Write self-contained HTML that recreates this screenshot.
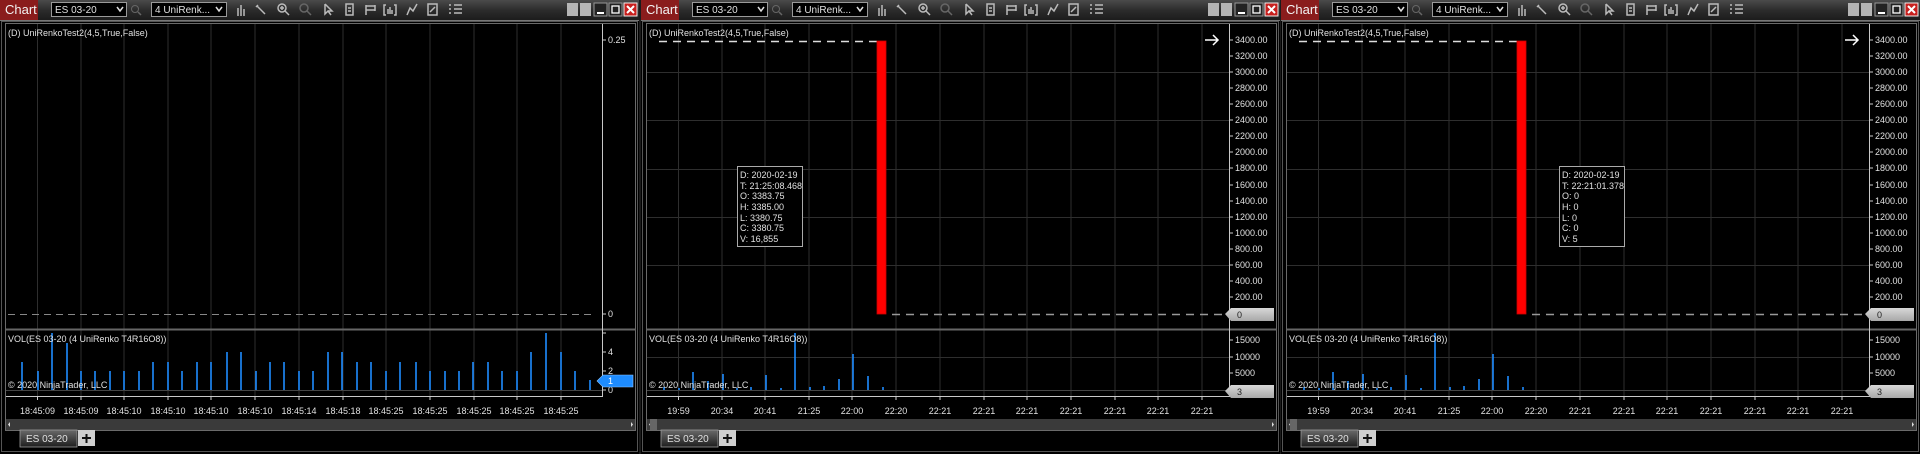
<!DOCTYPE html>
<html><head><meta charset="utf-8"><style>
html,body{margin:0;padding:0;background:#1b1b1b;width:1920px;height:454px;overflow:hidden}
.p{position:absolute;top:0;width:639px;height:454px}
svg{display:block}
text{font-family:"Liberation Sans",sans-serif;fill:#e0e0e0;font-size:9px}
</style></head><body>

<!-- shared defs -->
<svg width="0" height="0" style="position:absolute">
<defs>
<linearGradient id="tb" x1="0" y1="0" x2="0" y2="1"><stop offset="0" stop-color="#4a4a4a"/><stop offset="0.5" stop-color="#2c2c2c"/><stop offset="1" stop-color="#1c1c1c"/></linearGradient>
<linearGradient id="tab" x1="0" y1="0" x2="0" y2="1"><stop offset="0" stop-color="#6a6a6a"/><stop offset="1" stop-color="#1e1e1e"/></linearGradient>
<linearGradient id="gb" x1="0" y1="0" x2="0" y2="1"><stop offset="0" stop-color="#d8d8d8"/><stop offset="1" stop-color="#a8a8a8"/></linearGradient>
<g id="toolbar">
<rect x="0" y="0" width="639" height="20" fill="url(#tb)"/>
<rect x="0" y="20" width="639" height="1" fill="#777"/>
<rect x="0" y="0" width="38" height="20" fill="#8a1c1c"/>
<text x="5" y="14" style="font-size:13px;fill:#f2f2f2">Chart</text>
<rect x="51.5" y="2.5" width="75" height="14" fill="#000" stroke="#9a9a9a"/>
<text x="55" y="13" style="font-size:10px">ES 03-20</text>
<path d="M117 7l3 4 3-4" stroke="#ddd" stroke-width="1.5" fill="none"/>
<circle cx="135" cy="9" r="3.5" stroke="#666" fill="none"/><path d="M138 12l3 3" stroke="#666" stroke-width="1.5"/>
<rect x="151.5" y="2.5" width="75" height="14" fill="#000" stroke="#9a9a9a"/>
<text x="155" y="13" style="font-size:10px">4 UniRenk...</text>
<path d="M216 7l3 4 3-4" stroke="#ddd" stroke-width="1.5" fill="none"/>
<g stroke="#bbb" stroke-width="1.5" fill="none">
<path d="M238 8v8M241 5v11M244 9v7"/>
<path d="M257 6l8 8M256 7l2-2"/>
<circle cx="282" cy="8" r="4"/><path d="M285 11l4 4M280 8h4M282 6v4"/>
<circle cx="304" cy="8" r="4" stroke="#666"/><path d="M307 11l4 4" stroke="#666"/>
<path d="M325 4v10l3-3 3 4M325 4l7 7h-4"/>
<path d="M346 4h7v11h-7zM348 8h3M348 11h3"/>
<path d="M366 5v10M366 6h9v4h-9M375 5v6"/>
<path d="M386 5h-2v10h2M394 5h2v10h-2M388 14v-5M390 14v-7M392 14v-4"/>
<path d="M407 15l3-7 3 3 4-7"/>
<rect x="428" y="4" width="9" height="11"/><path d="M430 12l5-5"/>
<path d="M449 5h2M449 9h2M449 13h2M454 5h8M454 9h8M454 13h8"/>
</g>
<rect x="567" y="3" width="11" height="13" fill="#b5b5b5"/>
<rect x="580" y="3" width="11" height="13" fill="#b5b5b5"/>
<rect x="594" y="3" width="13" height="13" fill="#222" stroke="#999"/><path d="M597 13h7" stroke="#fff" stroke-width="2"/>
<rect x="609" y="3" width="13" height="13" fill="#222" stroke="#999"/><rect x="612" y="6" width="7" height="7" fill="none" stroke="#fff" stroke-width="1.3"/>
<rect x="624" y="3" width="13" height="13" fill="#c8201e" stroke="#eee"/><path d="M627 6l7 7M634 6l-7 7" stroke="#fff" stroke-width="2"/>
</g>
<g id="frame">
<rect x="1.5" y="21.5" width="636" height="430" fill="none" stroke="#555"/>
<rect x="5.5" y="23.5" width="630" height="407" fill="none" stroke="#6a6a6a"/>
<rect x="6" y="419" width="629" height="11" fill="#3a3a3a"/>
<path d="M10 422v5l-2-2.5z M631 422v5l2-2.5z" fill="#ddd"/>
<rect x="20" y="430" width="57" height="17" fill="url(#tab)" stroke="#999" stroke-width="0.8"/>
<text x="26" y="442" style="font-size:10px">ES 03-20</text>
<rect x="78" y="430" width="17" height="16" fill="#cfcfcf"/>
<path d="M82 438h9M86.5 434v9" stroke="#111" stroke-width="2"/>
</g>
<g id="vgrid" stroke="#2e2e2e" stroke-width="1">
<path d="M37.5 24V396M81 24V396M124 24V396M168 24V396M211 24V396M255 24V396M299 24V396M343 24V396M386 24V396M430 24V396M474 24V396M517 24V396M561 24V396"/>
</g>
<g id="ticks" stroke="#ccc">
<path d="M37.5 396v4M81 396v4M124 396v4M168 396v4M211 396v4M255 396v4M299 396v4M343 396v4M386 396v4M430 396v4M474 396v4M517 396v4M561 396v4"/>
</g>
</defs></svg>

<!-- PANEL 1 -->
<div class="p" style="left:0"><svg width="639" height="454">
<rect width="639" height="454" fill="#000"/>
<use href="#toolbar"/>
<use href="#vgrid"/>
<use href="#frame"/>
<path d="M6 329.5H636" stroke="#666" stroke-width="2"/>
<path d="M602.5 24V396M6 396.5H603" stroke="#c8c8c8"/>
<use href="#ticks"/>
<text x="8" y="36">(D) UniRenkoTest2(4,5,True,False)</text>
<path d="M602 40h4M602 314h4M602 333h4M602 352h4M602 371h4M602 390h4" stroke="#ccc"/>
<text x="608" y="43">0.25</text>
<path d="M8 314.5H596" stroke="#888" stroke-dasharray="7,5"/>
<text x="608" y="317">0</text>
<text x="608" y="355">4</text>
<text x="608" y="374">2</text>
<text x="608" y="393">0</text>
<path d="M6 390.5H602" stroke="#444"/>
<g stroke="#1e8cff" stroke-width="1.6">
<path d="M22 390v-28M38 390v-19M52 390v-57M67 390v-47M81 390v-19M95 390v-19M110 390v-19M124 390v-19M139 390v-19M153 390v-28M168 390v-28M182 390v-19M197 390v-28M211 390v-28M227 390v-38M241 390v-38M256 390v-19M270 390v-28M284 390v-28M299 390v-19M313 390v-19M328 390v-38M342 390v-38M357 390v-28M371 390v-28M386 390v-19M400 390v-28M416 390v-28M430 390v-19M445 390v-19M459 390v-19M473 390v-28M488 390v-28M502 390v-19M517 390v-19M531 390v-38M546 390v-57M561 390v-38M575 390v-19M590 390v-10"/>
</g>
<text x="8" y="342">VOL(ES 03-20 (4 UniRenko T4R16O8))</text>
<text x="8" y="388">© 2020 NinjaTrader, LLC</text>
<path d="M597 381l6-6h30v12h-30z" fill="#1e8cff" stroke="#8cc4ff" stroke-width="0.6"/>
<text x="608" y="384" style="fill:#fff">1</text>
<g text-anchor="middle">
<text x="37.5" y="414">18:45:09</text><text x="81" y="414">18:45:09</text><text x="124" y="414">18:45:10</text><text x="168" y="414">18:45:10</text><text x="211" y="414">18:45:10</text><text x="255" y="414">18:45:10</text><text x="299" y="414">18:45:14</text><text x="343" y="414">18:45:18</text><text x="386" y="414">18:45:25</text><text x="430" y="414">18:45:25</text><text x="474" y="414">18:45:25</text><text x="517" y="414">18:45:25</text><text x="561" y="414">18:45:25</text>
</g>
</svg></div>

<!-- PANEL 2 -->
<div class="p" style="left:641px"><svg width="639" height="454">
<rect width="639" height="454" fill="#000"/>
<use href="#toolbar"/>
<use href="#vgrid"/>
<use href="#frame"/>
<path d="M6 72.5H588M6 120.5H588M6 169.5H588M6 217.5H588M6 265.5H588M6 357.5H588" stroke="#2e2e2e"/>
<path d="M6 329.5H636" stroke="#666" stroke-width="2"/>
<path d="M588.5 24V396M6 396.5H589" stroke="#c8c8c8"/>
<use href="#ticks"/>
<path d="M6 390.5H588" stroke="#444"/>
<text x="8" y="36">(D) UniRenkoTest2(4,5,True,False)</text>
<path d="M18 41.5H236" stroke="#ddd" stroke-width="1.5" stroke-dasharray="8,6"/>
<path d="M251 314.5H582" stroke="#999" stroke-width="1.5" stroke-dasharray="8,6"/>
<rect x="236" y="41" width="9" height="273" fill="#ff0000" stroke="#c00" stroke-width="0.8"/>
<path d="M564 40h13M572 35l5 5-5 5" stroke="#fff" stroke-width="1.5" fill="none"/>
<rect x="96.5" y="166.5" width="65" height="80" fill="#000" stroke="#aaa"/>
<text x="99" y="178">D:  2020-02-19</text><text x="99" y="189">T:  21:25:08.468</text><text x="99" y="199">O:  3383.75</text><text x="99" y="210">H:  3385.00</text><text x="99" y="221">L:  3380.75</text><text x="99" y="231">C:  3380.75</text><text x="99" y="242">V:  16,855</text>
<g stroke="#ccc"><path d="M588 40h4M588 56h4M588 72h4M588 88h4M588 104h4M588 120h4M588 136h4M588 152h4M588 168h4M588 185h4M588 201h4M588 217h4M588 233h4M588 249h4M588 265h4M588 281h4M588 297h4M588 340h4M588 357h4M588 373h4"/></g>
<text x="594" y="43">3400.00</text><text x="594" y="59">3200.00</text><text x="594" y="75">3000.00</text><text x="594" y="91">2800.00</text><text x="594" y="107">2600.00</text><text x="594" y="123">2400.00</text><text x="594" y="139">2200.00</text><text x="594" y="155">2000.00</text><text x="594" y="171">1800.00</text><text x="594" y="188">1600.00</text><text x="594" y="204">1400.00</text><text x="594" y="220">1200.00</text><text x="594" y="236">1000.00</text><text x="594" y="252">800.00</text><text x="594" y="268">600.00</text><text x="594" y="284">400.00</text><text x="594" y="300">200.00</text>
<path d="M584 314l6-6h43v13h-43z" fill="url(#gb)"/>
<text x="596" y="318" style="fill:#222">0</text>
<text x="594" y="343">15000</text><text x="594" y="360">10000</text><text x="594" y="376">5000</text>
<path d="M584 391l6-6h43v13h-43z" fill="url(#gb)"/>
<text x="596" y="395" style="fill:#222">3</text>
<g stroke="#1e8cff" stroke-width="1.6">
<path d="M23 390v-3M38 390v-2M52 390v-18M67 390v-9M82 390v-16M96 390v-2M110 390v-3M125 390v-15M140 390v-2M154 390v-57M169 390v-3M183 390v-4M198 390v-11M212 390v-36M227 390v-14M242 390v-3"/>
</g>
<text x="8" y="342">VOL(ES 03-20 (4 UniRenko T4R16O8))</text>
<text x="8" y="388">© 2020 NinjaTrader, LLC</text>
<rect x="9" y="419" width="7" height="11" fill="#666"/>
<g text-anchor="middle">
<text x="37.5" y="414">19:59</text><text x="81" y="414">20:34</text><text x="124" y="414">20:41</text><text x="168" y="414">21:25</text><text x="211" y="414">22:00</text><text x="255" y="414">22:20</text><text x="299" y="414">22:21</text><text x="343" y="414">22:21</text><text x="386" y="414">22:21</text><text x="430" y="414">22:21</text><text x="474" y="414">22:21</text><text x="517" y="414">22:21</text><text x="561" y="414">22:21</text>
</g>
</svg></div>

<!-- PANEL 3 -->
<div class="p" style="left:1281px"><svg width="639" height="454">
<rect width="639" height="454" fill="#000"/>
<use href="#toolbar"/>
<use href="#vgrid"/>
<use href="#frame"/>
<path d="M6 72.5H588M6 120.5H588M6 169.5H588M6 217.5H588M6 265.5H588M6 357.5H588" stroke="#2e2e2e"/>
<path d="M6 329.5H636" stroke="#666" stroke-width="2"/>
<path d="M588.5 24V396M6 396.5H589" stroke="#c8c8c8"/>
<use href="#ticks"/>
<path d="M6 390.5H588" stroke="#444"/>
<text x="8" y="36">(D) UniRenkoTest2(4,5,True,False)</text>
<path d="M18 41.5H236" stroke="#ddd" stroke-width="1.5" stroke-dasharray="8,6"/>
<path d="M251 314.5H582" stroke="#999" stroke-width="1.5" stroke-dasharray="8,6"/>
<rect x="236" y="41" width="9" height="273" fill="#ff0000" stroke="#c00" stroke-width="0.8"/>
<path d="M564 40h13M572 35l5 5-5 5" stroke="#fff" stroke-width="1.5" fill="none"/>
<rect x="278.5" y="166.5" width="65" height="80" fill="#000" stroke="#aaa"/>
<text x="281" y="178">D:  2020-02-19</text><text x="281" y="189">T:  22:21:01.378</text><text x="281" y="199">O:  0</text><text x="281" y="210">H:  0</text><text x="281" y="221">L:  0</text><text x="281" y="231">C:  0</text><text x="281" y="242">V:  5</text>
<g stroke="#ccc"><path d="M588 40h4M588 56h4M588 72h4M588 88h4M588 104h4M588 120h4M588 136h4M588 152h4M588 168h4M588 185h4M588 201h4M588 217h4M588 233h4M588 249h4M588 265h4M588 281h4M588 297h4M588 340h4M588 357h4M588 373h4"/></g>
<text x="594" y="43">3400.00</text><text x="594" y="59">3200.00</text><text x="594" y="75">3000.00</text><text x="594" y="91">2800.00</text><text x="594" y="107">2600.00</text><text x="594" y="123">2400.00</text><text x="594" y="139">2200.00</text><text x="594" y="155">2000.00</text><text x="594" y="171">1800.00</text><text x="594" y="188">1600.00</text><text x="594" y="204">1400.00</text><text x="594" y="220">1200.00</text><text x="594" y="236">1000.00</text><text x="594" y="252">800.00</text><text x="594" y="268">600.00</text><text x="594" y="284">400.00</text><text x="594" y="300">200.00</text>
<path d="M584 314l6-6h43v13h-43z" fill="url(#gb)"/>
<text x="596" y="318" style="fill:#222">0</text>
<text x="594" y="343">15000</text><text x="594" y="360">10000</text><text x="594" y="376">5000</text>
<path d="M584 391l6-6h43v13h-43z" fill="url(#gb)"/>
<text x="596" y="395" style="fill:#222">3</text>
<g stroke="#1e8cff" stroke-width="1.6">
<path d="M23 390v-3M38 390v-2M52 390v-18M67 390v-9M82 390v-16M96 390v-2M110 390v-3M125 390v-15M140 390v-2M154 390v-57M169 390v-3M183 390v-4M198 390v-11M212 390v-36M227 390v-14M242 390v-3"/>
</g>
<text x="8" y="342">VOL(ES 03-20 (4 UniRenko T4R16O8))</text>
<text x="8" y="388">© 2020 NinjaTrader, LLC</text>
<rect x="9" y="419" width="7" height="11" fill="#666"/>
<g text-anchor="middle">
<text x="37.5" y="414">19:59</text><text x="81" y="414">20:34</text><text x="124" y="414">20:41</text><text x="168" y="414">21:25</text><text x="211" y="414">22:00</text><text x="255" y="414">22:20</text><text x="299" y="414">22:21</text><text x="343" y="414">22:21</text><text x="386" y="414">22:21</text><text x="430" y="414">22:21</text><text x="474" y="414">22:21</text><text x="517" y="414">22:21</text><text x="561" y="414">22:21</text>
</g>
</svg></div>

</body></html>
